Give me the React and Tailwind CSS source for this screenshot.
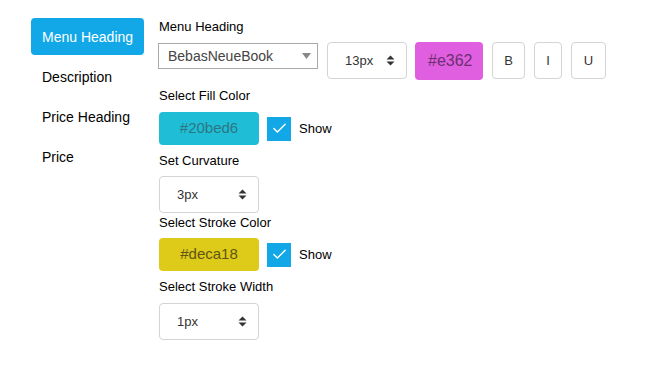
import { Check } from 'lucide-react';

const TABS = ['Menu Heading', 'Description', 'Price Heading', 'Price'];

function Spinner() {
  return (
    <svg width="9" height="11" viewBox="0 0 9 11" className="text-[#333]">
      <path d="M4.5 0.5 L8.5 4.5 H0.5 Z" fill="currentColor" />
      <path d="M4.5 10.5 L8.5 6.5 H0.5 Z" fill="currentColor" />
    </svg>
  );
}

function StepSelect({ value, width = 'w-[100px]' }) {
  return (
    <div className={`flex h-[37px] ${width} shrink-0 items-center justify-between rounded-[4px] border border-[#d4d4d4] bg-white pl-[17px] pr-[11px] text-[13px] text-[#333]`}>
      <span>{value}</span>
      <Spinner />
    </div>
  );
}

function ShowCheck() {
  return (
    <div className="flex items-center gap-[8px]">
      <div className="flex h-[24px] w-[24px] items-center justify-center bg-[#12a8e8]">
        <Check className="h-[17px] w-[17px] text-white" strokeWidth={2} />
      </div>
      <span className="text-[13px] text-black">Show</span>
    </div>
  );
}

function Label({ children, className = '' }) {
  return <div className={`whitespace-nowrap text-[13px] leading-[15px] text-black ${className}`}>{children}</div>;
}

export default function App() {
  return (
    <div className="flex h-[389px] w-[650px] bg-white pl-[31px] pt-[18px] font-['Liberation_Sans',Arial,sans-serif]">
      <div className="flex w-[113px] shrink-0 flex-col gap-[3px]">
        {TABS.map((tab, index) => (
          <div
            key={tab}
            className={`flex h-[37px] items-center whitespace-nowrap rounded-[4px] px-[11px] pt-[2px] text-[14px] ${index === 0 ? 'bg-[#12a8e8] text-white' : 'text-black'}`}
          >
            {tab}
          </div>
        ))}
      </div>

      <div className="ml-[15px] flex flex-col">
        <Label className="mt-[1px]">Menu Heading</Label>
        <div className="mt-[8px] flex items-start">
          <div className="mt-[1px] -ml-[1px] flex h-[26px] w-[160px] shrink-0 items-center justify-between border border-[#a9a9a9] bg-white pl-[9px] pr-[6px] text-[14px] text-[#444]">
            <span>BebasNeueBook</span>
            <svg width="9" height="6" viewBox="0 0 9 6">
              <path d="M0 0 H9 L4.5 6 Z" fill="#888" />
            </svg>
          </div>
          <div className="ml-[9px]">
            <StepSelect value="13px" width="w-[80px]" />
          </div>
          <div className="ml-[8px] flex h-[38px] w-[68px] shrink-0 items-center overflow-hidden rounded-[4px] bg-[#e05fe0] pl-[13px] text-[16px] text-[#6e2f72]">
            #e362
          </div>
          <div className="ml-[9px] flex h-[37px] w-[33px] items-center justify-center rounded-[4px] border border-[#d4d4d4] bg-white text-[13px] text-[#333]">
            B
          </div>
          <div className="ml-[9px] flex h-[37px] w-[28px] items-center justify-center rounded-[4px] border border-[#d4d4d4] bg-white text-[13px] text-[#333]">
            I
          </div>
          <div className="ml-[9px] flex h-[37px] w-[35px] items-center justify-center rounded-[4px] border border-[#d4d4d4] bg-white text-[13px] text-[#333]">
            U
          </div>
        </div>

        <Label className="mt-[8px]">Select Fill Color</Label>
        <div className="mt-[9px] flex items-center gap-[8px]">
          <div className="flex h-[33px] w-[100px] items-center justify-center rounded-[4px] bg-[#20bed6] text-[15px] text-[#2c7683]">
            #20bed6
          </div>
          <ShowCheck />
        </div>

        <Label className="mt-[8px]">Set Curvature</Label>
        <div className="mt-[8px]">
          <StepSelect value="3px" />
        </div>

        <Label className="mt-[2px]">Select Stroke Color</Label>
        <div className="mt-[8px] flex items-center gap-[8px]">
          <div className="flex h-[33px] w-[100px] items-center justify-center rounded-[4px] bg-[#deca18] text-[15px] text-[#5e5516]">
            #deca18
          </div>
          <ShowCheck />
        </div>

        <Label className="mt-[8px]">Select Stroke Width</Label>
        <div className="mt-[9px]">
          <StepSelect value="1px" />
        </div>
      </div>
    </div>
  );
}
